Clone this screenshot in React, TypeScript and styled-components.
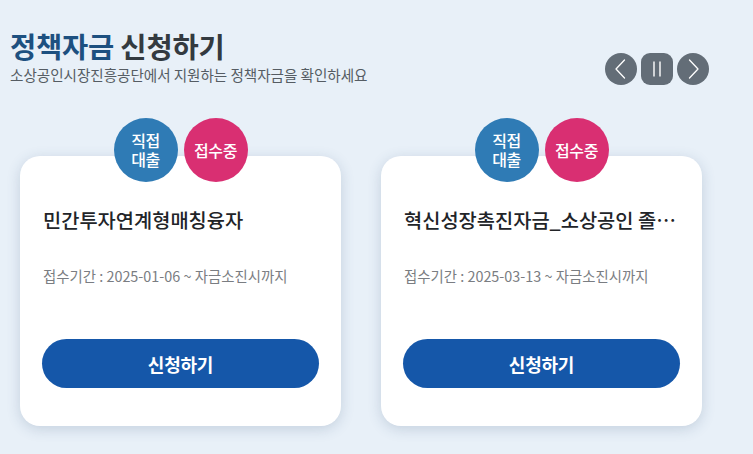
import React from "react";
import styled, { createGlobalStyle } from "styled-components";

const Global = createGlobalStyle`
  html, body { margin: 0; padding: 0; }
  body {
    background: #e8f0f8;
    font-family: "Noto Sans CJK KR", "Noto Sans", sans-serif;
    width: 753px;
    height: 454px;
    overflow: hidden;
  }
`;

const Page = styled.div`
  width: 753px;
  height: 454px;
  box-sizing: border-box;
`;

const Header = styled.header`
  display: flex;
  justify-content: space-between;
  align-items: flex-end;
  padding: 28px 44px 0 10px;
`;

const TitleBlock = styled.div`
  display: flex;
  flex-direction: column;
`;

const Title = styled.h1`
  margin: 0;
  font-size: 28.5px;
  line-height: 36px;
  font-weight: 700;
  letter-spacing: -0.2px;
  color: #333a40;
`;

const Accent = styled.span`
  color: #1d5080;
`;

const Subtitle = styled.p`
  margin: 0;
  font-size: 14.6px;
  line-height: 21px;
  letter-spacing: -0.05px;
  color: #555c63;
`;

const Nav = styled.div`
  display: flex;
  gap: 4px;
`;

const NavButton = styled.button<{ $square?: boolean }>`
  width: 32px;
  height: 32px;
  padding: 0;
  border: none;
  border-radius: ${(p) => (p.$square ? "9px" : "50%")};
  background: #636d77;
  display: flex;
  align-items: center;
  justify-content: center;
  cursor: pointer;
`;

const CardRow = styled.div`
  display: flex;
  gap: 40px;
  padding: 71px 0 0 20px;
`;

const Card = styled.article`
  position: relative;
  width: 321px;
  height: 270px;
  box-sizing: border-box;
  background: #ffffff;
  border-radius: 20px;
  box-shadow: 0 3px 14px rgba(50, 80, 120, 0.2);
  padding: 50px 22px 38px;
  display: flex;
  flex-direction: column;
`;

const Badges = styled.div`
  position: absolute;
  top: -38px;
  left: 50%;
  transform: translateX(-50%);
  display: flex;
  gap: 6px;
`;

const Badge = styled.div<{ $color: string }>`
  width: 64px;
  height: 64px;
  border-radius: 50%;
  background: ${(p) => p.$color};
  color: #ffffff;
  display: flex;
  align-items: center;
  justify-content: center;
  text-align: center;
  font-size: 16px;
  line-height: 19px;
  font-weight: 500;
  letter-spacing: -0.4px;
`;

const CardTitle = styled.h2`
  margin: 0;
  padding-left: 1px;
  font-size: 19.8px;
  line-height: 27px;
  font-weight: 500;
  letter-spacing: 0;
  color: #222428;
  white-space: nowrap;
  overflow: hidden;
  text-overflow: ellipsis;
`;

const Period = styled.p`
  margin: 33px 0 0;
  padding-left: 1px;
  font-size: 14.4px;
  line-height: 20px;
  letter-spacing: 0;
  color: #7a7d82;
`;

const ApplyButton = styled.button`
  margin-top: auto;
  height: 49px;
  width: 100%;
  border: none;
  border-radius: 25px;
  background: #1557a9;
  color: #ffffff;
  font-family: inherit;
  font-size: 18px;
  font-weight: 700;
  letter-spacing: -0.2px;
  cursor: pointer;
`;

const Chevron = ({ dir }: { dir: "left" | "right" }) => (
  <svg width="32" height="32" viewBox="0 0 32 32" fill="none">
    <path
      d={dir === "left" ? "M19.5 7 L11 16 L19.5 25" : "M12.5 7 L21 16 L12.5 25"}
      stroke="#fff"
      strokeWidth="1.3"
      strokeLinecap="round"
      strokeLinejoin="round"
    />
  </svg>
);

const PauseIcon = () => (
  <svg width="32" height="32" viewBox="0 0 32 32" fill="none">
    <path d="M13 8.5 V23.5 M19 8.5 V23.5" stroke="#fff" strokeWidth="1.4" />
  </svg>
);

const items = [
  { title: "민간투자연계형매칭융자", period: "접수기간 : 2025-01-06 ~ 자금소진시까지" },
  { title: "혁신성장촉진자금_소상공인 졸업기업 지원", period: "접수기간 : 2025-03-13 ~ 자금소진시까지" },
];

export default function App() {
  return (
    <Page>
      <Global />
      <Header>
        <TitleBlock>
          <Title>
            <Accent>정책자금</Accent> 신청하기
          </Title>
          <Subtitle>소상공인시장진흥공단에서 지원하는 정책자금을 확인하세요</Subtitle>
        </TitleBlock>
        <Nav>
          <NavButton aria-label="이전">
            <Chevron dir="left" />
          </NavButton>
          <NavButton $square aria-label="정지">
            <PauseIcon />
          </NavButton>
          <NavButton aria-label="다음">
            <Chevron dir="right" />
          </NavButton>
        </Nav>
      </Header>
      <CardRow>
        {items.map((it) => (
          <Card key={it.title}>
            <Badges>
              <Badge $color="#2f7bb5">
                직접
                <br />
                대출
              </Badge>
              <Badge $color="#d92f72">접수중</Badge>
            </Badges>
            <CardTitle>{it.title}</CardTitle>
            <Period>{it.period}</Period>
            <ApplyButton>신청하기</ApplyButton>
          </Card>
        ))}
      </CardRow>
    </Page>
  );
}
